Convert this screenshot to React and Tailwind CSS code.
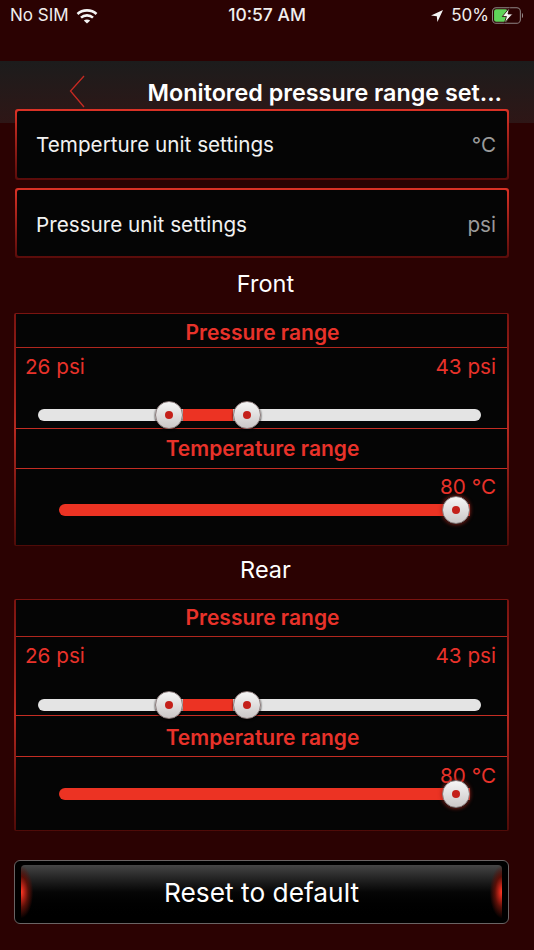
import React from "react";

const Thumb = ({ glow }) => (
  <div
    className={`w-[28px] h-[28px] rounded-full border border-[#8a7a7a] bg-gradient-to-b from-[#f6f6f6] to-[#cbc7c7] flex items-center justify-center shrink-0 ${
      glow ? "shadow-[0_0_4px_#a3231a]" : "shadow-[0_1px_2px_#000]"
    }`}
  >
    <div className="w-[8px] h-[8px] rounded-full bg-[#c4201a]" />
  </div>
);

const RangeSection = ({ title, titleBox, headH, headPt, sliderH, trackMt, tempHeadH, tempHeadPt, bottomH, labelPt, tempMt }) => (
  <div>
    <div className={`${titleBox} pr-[3px] text-center text-white text-[23.5px] leading-[30px]`}>{title}</div>
    <div className="ml-[14px] mr-[25px] px-[2px] py-px rounded-[2px] bg-gradient-to-b from-[#7a1410] via-[#b5281f] to-[#4f0b08]">
      <div className="bg-[#050505] text-[#e8322a]">
        <div className={`${headH} ${headPt} pl-[2px] flex items-center justify-center font-semibold text-[21px] border-b border-[#b0271e]`}>
          Pressure range
        </div>
        <div className={sliderH}>
          <div className="flex justify-between pl-[9px] pr-[11px] pt-[5px] text-[20.7px] leading-[28px]">
            <span>26 psi</span>
            <span>43 psi</span>
          </div>
          <div className={`${trackMt} ml-[22px] mr-[26px] h-[12px] rounded-full bg-[#e4e4e4] flex items-center`}>
            <div className="w-[117px]" />
            <Thumb />
            <div className="w-[50px] h-[12px] bg-[#ec3323]" />
            <Thumb />
          </div>
        </div>
        <div className={`${tempHeadH} ${tempHeadPt} pl-[2px] flex items-center justify-center font-semibold text-[21px] border-y border-[#c42d23]`}>
          Temperature range
        </div>
        <div className={bottomH}>
          <div className={`${labelPt} text-right pr-[11px] text-[20.7px] leading-[28px]`}>80 °C</div>
          <div className={`${tempMt} ml-[43px] mr-[37px] h-[12px] rounded-l-full bg-[#ec3323] flex items-center justify-end`}>
            <Thumb glow />
          </div>
        </div>
      </div>
    </div>
  </div>
);

const UnitRow = ({ label, value, height, textPt }) => (
  <div className={`${height} ml-[15px] mr-[25px] p-[2px] rounded-[3px] bg-gradient-to-b from-[#dc3226] to-[#5a0c0a]`}>
    <div className={`${textPt} h-full rounded-[2px] bg-[#050505] flex items-center justify-between pl-[19px] pr-[11px]`}>
      <span className="text-[#f2f2f2] text-[20.7px]">{label}</span>
      <span className="text-[#9a9a9a] text-[20.7px]">{value}</span>
    </div>
  </div>
);

export default function App() {
  return (
    <div className="w-[534px] h-[950px] overflow-hidden bg-[#2b0202] font-['Inter',sans-serif] flex flex-col">
      {/* status bar */}
      <div className="h-[61px] shrink-0 relative text-[#f0eeee] text-[17px]">
        <div className="flex items-center justify-between h-[31px] pl-[10px] pr-[9px]">
          <div className="flex items-center gap-[7px]">
            <span>No SIM</span>
            <svg width="22" height="16" viewBox="0 0 22 16" fill="none" stroke="#f4f4f4" strokeWidth="2.6">
              <path d="M1.5 6 C6.5 1.2 15.5 1.2 20.5 6" />
              <path d="M5 9.6 C8.2 6.6 13.8 6.6 17 9.6" />
              <path d="M11 15.5 L7.8 12.6 C9.6 11.1 12.4 11.1 14.2 12.6 Z" fill="#f4f4f4" stroke="none" />
            </svg>
          </div>
          <div className="flex items-center">
            <svg width="14" height="14" viewBox="0 0 14 14" className="mr-[7px]">
              <path d="M13 1 L1 6.6 L6.8 7.2 L7.4 13 Z" fill="#f4f4f4" />
            </svg>
            <span>50%</span>
            <svg width="33" height="17" viewBox="0 0 32 16" className="ml-[3px]">
              <rect x="0.5" y="0.5" width="27" height="15" rx="3.5" fill="none" stroke="#8f8585" />
              <rect x="2" y="2" width="13" height="12" rx="2" fill="#5fd35a" />
              <path d="M29 5.5 C30.5 6 30.5 10 29 10.5 Z" fill="#8f8585" />
              <path d="M17 0.5 L10 9 H14 L12 15.5 L20 6.5 H15.5 Z" fill="#f4f4f4" stroke="#2b0202" strokeWidth="0.8" />
            </svg>
          </div>
        </div>
        <div className="absolute left-0 right-0 top-[4px] text-center font-medium text-[17.5px] leading-[22px]">10:57 AM</div>
      </div>

      {/* nav bar */}
      <div className="h-[62px] shrink-0 bg-gradient-to-b from-[#1c1c1c] to-[#2e1616] relative">
        <svg width="18" height="34" viewBox="0 0 18 34" fill="none" stroke="#c62a22" strokeWidth="1.3" className="absolute left-[69px] top-[14px]">
          <path d="M15 1 L1.5 16 L15 32" />
        </svg>
        <div className="absolute right-[32px] top-[17px] text-white font-semibold text-[23.3px] leading-[30px] whitespace-nowrap">
          Monitored pressure range set...
        </div>
      </div>

      {/* unit rows */}
      <div className="mt-[-14px] relative flex flex-col gap-[8px]">
        <UnitRow height="h-[71px]" textPt="pt-px" label="Temperture unit settings" value="°C" />
        <UnitRow height="h-[70px]" textPt="pt-[4px]" label="Pressure unit settings" value="psi" />
      </div>

      <RangeSection
        title="Front"
        titleBox="h-[55px] pt-[11px]"
        headH="h-[34px]"
        headPt="pt-[4px]"
        sliderH="h-[80px]"
        trackMt="mt-[28px]"
        tempHeadH="h-[41px]"
        tempHeadPt="pt-0"
        bottomH="h-[76px]"
        labelPt="pt-[4px]"
        tempMt="mt-[3px]"
      />
      <RangeSection
        title="Rear"
        titleBox="h-[53px] pt-[9px]"
        headH="h-[37px]"
        headPt="pt-0"
        sliderH="h-[78px]"
        trackMt="mt-[29px]"
        tempHeadH="h-[42px]"
        tempHeadPt="pt-[4px]"
        bottomH="h-[73px]"
        labelPt="pt-[5px]"
        tempMt="mt-[-2px]"
      />

      {/* reset button */}
      <div className="mt-[29px] ml-[14px] mr-[25px] h-[64px] rounded-[6px] border border-[#6a6464] bg-black pt-[4px] pb-[2px] px-[6px] relative">
        <div className="h-full rounded-[4px] bg-gradient-to-b from-[#464646] via-[#050505] via-50% to-black flex items-center justify-center text-white text-[26.3px]">
          Reset to default
        </div>
        <div className="absolute left-[6px] top-[5px] w-[12px] h-[52px] bg-[radial-gradient(ellipse_at_left,#ff3a25_0%,#d0281a_14%,#5a1008_42%,transparent_72%)]" />
        <div className="absolute right-[6px] top-[5px] w-[12px] h-[52px] bg-[radial-gradient(ellipse_at_right,#ff3a25_0%,#d0281a_14%,#5a1008_42%,transparent_72%)]" />
      </div>
    </div>
  );
}
